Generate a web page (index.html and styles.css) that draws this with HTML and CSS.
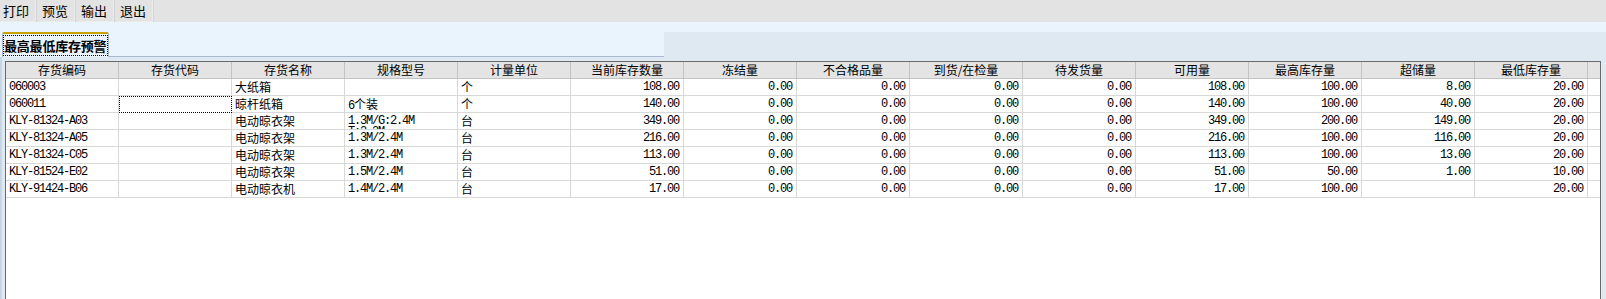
FILE: index.html
```html
<!DOCTYPE html>
<html lang="zh">
<head>
<meta charset="utf-8">
<title>最高最低库存预警</title>
<link rel="stylesheet" href="styles.css">
</head>
<body>
<div class="toolbar">
  <div class="btn">打印</div>
  <div class="btn">预览</div>
  <div class="btn">输出</div>
  <div class="btn">退出</div>
</div>
<div class="tabbar">
  <div class="tab"><span class="tab-label">最高最低库存预警</span></div>
  <div class="tab-line"></div>
  <div class="side-panel"></div>
</div>
<div class="page">
  <div class="grid">
    <div class="h">存货编码</div><div class="h">存货代码</div><div class="h">存货名称</div><div class="h">规格型号</div><div class="h">计量单位</div><div class="h">当前库存数量</div><div class="h">冻结量</div><div class="h">不合格品量</div><div class="h">到货/在检量</div><div class="h">待发货量</div><div class="h">可用量</div><div class="h">最高库存量</div><div class="h">超储量</div><div class="h">最低库存量</div><div class="h hf"></div>

    <div class="c m">060003</div><div class="c"></div><div class="c cj">大纸箱</div><div class="c"></div><div class="c cj">个</div><div class="c n">108.00</div><div class="c n">0.00</div><div class="c n">0.00</div><div class="c n">0.00</div><div class="c n">0.00</div><div class="c n">108.00</div><div class="c n">100.00</div><div class="c n">8.00</div><div class="c n">20.00</div><div class="c f"></div>

    <div class="c m">060011</div><div class="c focus"></div><div class="c cj">晾杆纸箱</div><div class="c m">6<span class="cjs">个装</span></div><div class="c cj">个</div><div class="c n">140.00</div><div class="c n">0.00</div><div class="c n">0.00</div><div class="c n">0.00</div><div class="c n">0.00</div><div class="c n">140.00</div><div class="c n">100.00</div><div class="c n">40.00</div><div class="c n">20.00</div><div class="c f"></div>

    <div class="c m">KLY-81324-A03</div><div class="c"></div><div class="c cj">电动晾衣架</div><div class="c m wrap"><span class="line1">1.3M/G:2.4M</span><span class="line2">T:2.2M</span></div><div class="c cj">台</div><div class="c n">349.00</div><div class="c n">0.00</div><div class="c n">0.00</div><div class="c n">0.00</div><div class="c n">0.00</div><div class="c n">349.00</div><div class="c n">200.00</div><div class="c n">149.00</div><div class="c n">20.00</div><div class="c f"></div>

    <div class="c m">KLY-81324-A05</div><div class="c"></div><div class="c cj">电动晾衣架</div><div class="c m">1.3M/2.4M</div><div class="c cj">台</div><div class="c n">216.00</div><div class="c n">0.00</div><div class="c n">0.00</div><div class="c n">0.00</div><div class="c n">0.00</div><div class="c n">216.00</div><div class="c n">100.00</div><div class="c n">116.00</div><div class="c n">20.00</div><div class="c f"></div>

    <div class="c m">KLY-81324-C05</div><div class="c"></div><div class="c cj">电动晾衣架</div><div class="c m">1.3M/2.4M</div><div class="c cj">台</div><div class="c n">113.00</div><div class="c n">0.00</div><div class="c n">0.00</div><div class="c n">0.00</div><div class="c n">0.00</div><div class="c n">113.00</div><div class="c n">100.00</div><div class="c n">13.00</div><div class="c n">20.00</div><div class="c f"></div>

    <div class="c m">KLY-81524-E02</div><div class="c"></div><div class="c cj">电动晾衣架</div><div class="c m">1.5M/2.4M</div><div class="c cj">台</div><div class="c n">51.00</div><div class="c n">0.00</div><div class="c n">0.00</div><div class="c n">0.00</div><div class="c n">0.00</div><div class="c n">51.00</div><div class="c n">50.00</div><div class="c n">1.00</div><div class="c n">10.00</div><div class="c f"></div>

    <div class="c m">KLY-91424-B06</div><div class="c"></div><div class="c cj">电动晾衣机</div><div class="c m">1.4M/2.4M</div><div class="c cj">台</div><div class="c n">17.00</div><div class="c n">0.00</div><div class="c n">0.00</div><div class="c n">0.00</div><div class="c n">0.00</div><div class="c n">17.00</div><div class="c n">100.00</div><div class="c n"></div><div class="c n">20.00</div><div class="c f"></div>
  </div>
</div>
</body>
</html>
```

FILE: styles.css
```css
* { box-sizing: border-box; }
html, body {
  margin: 0;
  padding: 0;
  width: 1606px;
  height: 299px;
  overflow: hidden;
  background: #eaf4fc;
  font-family: "Noto Sans CJK SC", sans-serif;
  font-size: 12px;
  color: #000;
}
.toolbar {
  height: 22px;
  background: #e3e3e3;
  display: flex;
  gap: 2px;
}
.btn {
  width: 37px;
  height: 22px;
  padding-left: 3px;
  font-size: 13px;
  line-height: 21px;
  border-right: 1px solid #d4d4d4;
  box-shadow: inset -1px -1px 0 #ececec;
}
.tabbar {
  height: 35px;
  display: flex;
  align-items: flex-end;
}
.tab {
  margin-left: 2px;
  width: 107px;
  height: 25px;
  border-top: 2px solid #c9a300;
  border-left: 1px solid #a7b9d0;
  border-right: 1px solid #a7b9d0;
  border-radius: 2px 2px 0 0;
  background: #eaf4fc;
  padding: 1px 0 0 0;
}
.tab-label {
  display: block;
  height: 21px;
  border: 1px dotted #000;
  font-weight: bold;
  font-size: 13px;
  line-height: 19px;
  letter-spacing: -0.2px;
  white-space: nowrap;
  overflow: hidden;
}
.tab-line {
  width: 555px;
  height: 1px;
  background: #a7b9d0;
}
.side-panel {
  flex: 1;
  height: 29px;
  background: #dfe9f2;
  margin-bottom: -4px;
  position: relative;
}
.page {
  height: 300px;
  padding: 4px 5px 0 5px;
  background: linear-gradient(to right, #c7d6e6 0, #c7d6e6 2px, #dfe9f2 2px);
}
.grid {
  width: 1596px;
  height: 400px;
  border: 1px solid #6a6a6a;
  border-bottom: none;
  background: #fff;
  display: grid;
  grid-template-columns: repeat(14, 113px) 1fr;
  grid-auto-rows: 17px;
  align-content: start;
}
.h {
  background: #e4e4e4;
  border-right: 1px solid #c3c3c3;
  border-bottom: 1px solid #c3c3c3;
  text-align: center;
  line-height: 16px;
  font-size: 12px;
  white-space: nowrap;
}
.hf { border-right: none; }
.c {
  border-right: 1px solid #d8d8d8;
  border-bottom: 1px solid #d8d8d8;
  line-height: 16px;
  padding: 0 3px;
  white-space: nowrap;
  overflow: hidden;
}
.f { border-right: none; }
.m {
  font-family: "Liberation Mono", "Noto Sans CJK SC", monospace;
  letter-spacing: -1.2px;
}
.cjs {
  font-family: "Noto Sans CJK SC", sans-serif;
  letter-spacing: 0;
}
.cj { font-size: 12px; }
.n {
  font-family: "Liberation Mono", monospace;
  letter-spacing: -1.2px;
  text-align: right;
  padding-right: 4px;
}
.wrap {
  line-height: 12px;
  padding-top: 2px;
}
.line1, .line2 { display: block; }
.line2 { margin-top: -1px; }
.focus {
  border: 1px dotted #000;
}
```
